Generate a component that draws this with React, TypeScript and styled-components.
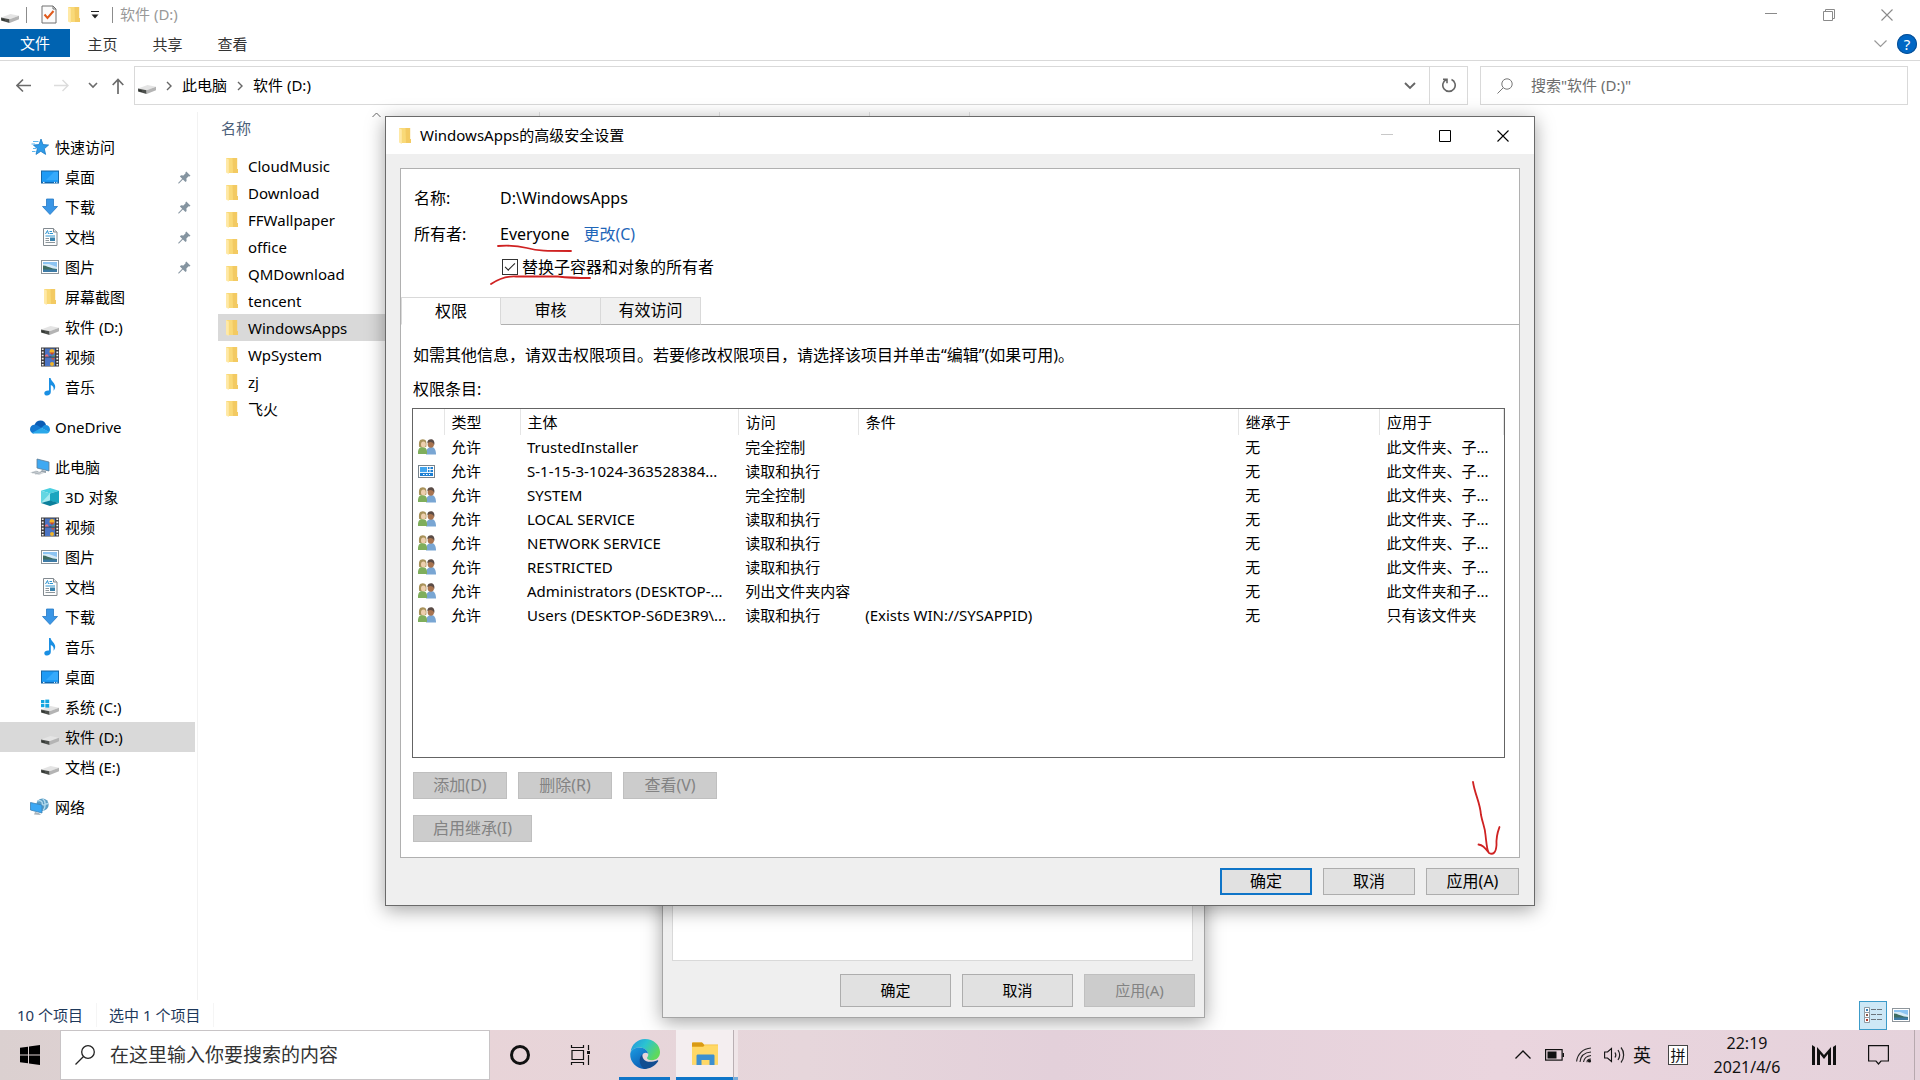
import React from 'react';
import styled, { createGlobalStyle, css } from 'styled-components';

const FONT = '"Noto Sans", "Noto Sans CJK SC", sans-serif';

const GlobalStyle = createGlobalStyle`
  *, *::before, *::after { box-sizing: border-box; }
  html, body { margin: 0; padding: 0; }
  body { font-family: ${FONT}; font-size: 15px; line-height: 24px; color: #000; background: #fff; overflow: hidden; }
  button, input { font-family: inherit; font-size: inherit; line-height: inherit; color: inherit; margin: 0; padding: 0; }
  button { border: 0; background: none; cursor: default; }
  svg { display: block; flex: none; }
`;

/* ---------- icons ---------- */

const DriveIcon = ({ system = false }: { system?: boolean }) => (
  <svg width="18" height="18" viewBox="0 0 18 18">
    <path d="M0 11.6 9.5 8 18 9.8 8.6 13.2Z" fill="#e4e4e4" />
    <path d="M0 11.6 8.6 13.2V17L0 14.6Z" fill="#4c4f4c" />
    <path d="M1 13 4 13.5V14.8L1 14.2Z" fill="#2d322d" />
    <path d="M8.6 13.2 18 9.8V13.2L8.6 17Z" fill="#b4b4b4" />
    {system && (
      <g fill="#12a5e0">
        <rect x="0" y="2" width="3.4" height="3.2" />
        <rect x="4.3" y="1.6" width="3.9" height="3.6" />
        <rect x="0" y="6" width="3.4" height="3.2" />
        <rect x="4.3" y="6" width="3.9" height="3.6" />
      </g>
    )}
  </svg>
);

const FolderIcon = () => (
  <svg width="14" height="18" viewBox="0 0 14 18">
    <path d="M1 1H12V13.5H13V16H3L1 14Z" fill="#f9d978" />
    <path d="M7.5 1H12.2V12H13V16H8Z" fill="#f3ca62" />
    <path d="M1 1 3.8 2.6V17L1 15.4Z" fill="#ffe9a6" />
  </svg>
);

const CheckDocIcon = () => (
  <svg width="16" height="19" viewBox="0 0 16 19">
    <path d="M1 1H12L15 4V18H1Z" fill="#fbfbfb" stroke="#707070" />
    <path d="M12 1V4H15" fill="none" stroke="#707070" />
    <path d="M3.5 9.5 6.5 13 12.5 6" fill="none" stroke="#e05a1c" strokeWidth="2" />
  </svg>
);

const StarIcon = () => (
  <svg width="20" height="18" viewBox="0 0 20 18">
    <path d="M11 1 13 6.6 18.6 7 14.3 10.8 15.6 16.4 10.8 13.3 6 16.4 7.3 10.8 3.5 7 9 6.6Z" fill="#2f9be8" stroke="#1978c4" strokeWidth=".8" />
    <path d="M3 3.500H8.500M1.500 6H5M3 10.500H6M2 13.500H5.500" stroke="#5db6ef" strokeWidth="1" />
  </svg>
);

const DesktopIcon = () => (
  <svg width="18" height="18" viewBox="0 0 18 18">
    <rect x=".5" y="3" width="17" height="12" fill="#1e9bf5" stroke="#1768a8" />
    <path d="M5 12 13 4H17V12Z" fill="#35aafc" />
    <path d="M1 14.4H17" stroke="#0d63ad" strokeWidth="1" />
    <path d="M2 14.4H3.5M13 14.4H14M15.300 14.4H16.3" stroke="#fff" strokeWidth="1" />
  </svg>
);

const DownloadIcon = () => (
  <svg width="18" height="18" viewBox="0 0 18 18">
    <path d="M5.500 1H12.500V8.500H16.500L9 16.500 1.500 8.500H5.500Z" fill="#3a96e6" stroke="#2579c4" strokeWidth=".8" />
  </svg>
);

const DocumentIcon = () => (
  <svg width="18" height="18" viewBox="0 0 18 18">
    <path d="M2.500 .5H12.500L16 4V17.500H2.500Z" fill="#fdfdfd" stroke="#828a90" />
    <path d="M12.500 .5V4H16" fill="#e7e7e7" stroke="#828a90" />
    <path d="M4.500 6 6.500 2.500 7.500 6M8.500 3.500H11M8.500 5.500H12M4.500 8H14" fill="none" stroke="#2c93cf" strokeWidth="1" />
    <path d="M4.500 10.500H8M4.500 12.500H8M4.500 14.500H14" stroke="#8c969c" strokeWidth="1" />
    <rect x="9" y="9.500" width="5" height="3.500" fill="#3b83ad" />
  </svg>
);

const PictureIcon = () => (
  <svg width="18" height="18" viewBox="0 0 18 18">
    <rect x=".5" y="2.500" width="17" height="13" fill="#fff" stroke="#8d959b" />
    <rect x="2" y="4" width="14" height="10" fill="#8cc4f2" />
    <path d="M2 6H8L16 9V12H2Z" fill="#d5eaf7" />
    <path d="M2 7.500C5 7.500 8 9.500 12 10.500L16 11V12H2Z" fill="#3f6d62" />
    <path d="M2 11.500H16V14H2Z" fill="#3d7ba6" />
  </svg>
);

const VideoIcon = () => (
  <svg width="18" height="20" viewBox="0 0 18 20">
    <rect x="0" y=".5" width="18" height="19" fill="#3b3b3f" />
    <rect x="4" y="1.500" width="10" height="8" fill="#4a74c4" />
    <rect x="4" y="10.500" width="10" height="8.500" fill="#4a74c4" />
    <path d="M4 8.500 6 7 8 9.500H4Z" fill="#e9707a" />
    <circle cx="11" cy="4.500" r="2.500" fill="#f0b429" />
    <path d="M8.500 5.500H13.500L11 8Z" fill="#c2452f" />
    <path d="M12 8.500H14V9.500H10Z" fill="#5ca84c" />
    <path d="M10 11H14L12 13.500Z" fill="#b65a46" />
    <circle cx="11" cy="17" r="2" fill="#f0b429" />
    <path d="M1.700 1.500V19.500M16.300 1.500V19.500" stroke="#f5f5f5" strokeWidth="1.800" strokeDasharray="1.600 1.500" />
  </svg>
);

const MusicIcon = () => (
  <svg width="18" height="18" viewBox="0 0 18 18">
    <path d="M8 0H9.600C10 3.500 14.500 5 14.200 9 14.100 10.800 13.200 12 12.500 12.700 13.200 9.500 12 8 9.800 7V14C9.800 16 8 17.500 6 17.500 4.400 17.500 3.300 16.600 3.300 15.200 3.300 13.500 5.300 12.300 8 12.600Z" fill="#1a8fe3" />
  </svg>
);

const CloudIcon = () => (
  <svg width="20" height="14" viewBox="0 0 20 14">
    <path d="M4.500 5C5.500 1.800 8 .5 10.500 .5 13.500 .5 15.500 2.500 16 5L10 9Z" fill="#0a5cb5" />
    <path d="M4.500 4.800C2 4.800 0 6.800 0 9.200 0 11.500 1.500 13 3.500 13.500L12 8.300 8 5.700C7 5 5.700 4.800 4.500 4.800Z" fill="#1478d0" />
    <path d="M15.500 5C18 5 20 7 20 9.500 20 10.500 19.600 11.500 19 12.200L11.500 8C12.500 6.500 13.500 5 15.500 5Z" fill="#1a90e0" />
    <path d="M2 13 11.500 7.800 19.200 12C18.500 13 17.300 13.500 16 13.500H4.300C3.400 13.500 2.600 13.400 2 13Z" fill="#2aa8ea" />
  </svg>
);

const PcIcon = () => (
  <svg width="20" height="18" viewBox="0 0 20 18">
    <path d="M7 1 19 4V13L7 10Z" fill="#3fa9f2" stroke="#5d7c95" strokeWidth=".8" />
    <path d="M12 12 16 13V15L10 14Z" fill="#98a4ad" />
    <path d="M0 14.500 6 12.500 14 15 9 17Z" fill="#cfd4d8" />
    <path d="M2 14.800 8 13.500M5 16 11 14.500" stroke="#9aa3aa" strokeWidth=".7" />
  </svg>
);

const CubeIcon = () => (
  <svg width="18" height="18" viewBox="0 0 18 18">
    <path d="M9 0 18 2.800 9 5.500 0 2.800Z" fill="#48cfe0" />
    <path d="M0 2.800 9 5.500V13L0 15Z" fill="#a6eaf0" />
    <path d="M9 5.500 18 2.800V15L9 13Z" fill="#19a5bf" />
    <path d="M0 15 9 12.500 18 15 9 18Z" fill="#0b809c" />
    <path d="M0 2.800 9 5.500 0 15Z" fill="#63d6e2" />
  </svg>
);

const NetworkIcon = () => (
  <svg width="20" height="18" viewBox="0 0 20 18">
    <circle cx="12.500" cy="6.700" r="6.200" fill="#5a9dc4" />
    <path d="M8 3C11 2 13 4 12 6.500 14 8 16 5.500 18 5.500M12.500 .5C16 3 16 9 13 12.500" fill="none" stroke="#b5dcef" strokeWidth="1.300" />
    <path d="M.5 4.500 12 7V15L.5 12Z" fill="#3ba8f4" stroke="#3a81b4" strokeWidth=".8" />
    <path d="M5 14 9 15 11 17 4 16.500Z" fill="#a9b3ba" />
  </svg>
);

const PinIcon = () => (
  <svg width="13" height="13" viewBox="0 0 13 13">
    <path d="M8.300 .5 12.500 4.700 11.300 5.500 10.600 5.300 8.400 7.600 8.600 9.900 7.500 11 4.900 8.500 1 12.500H.3V11.800L4.200 7.800 1.900 5.400 3 4.300 5.400 4.500 7.600 2.300 7.400 1.500Z" fill="#8594a0" />
  </svg>
);

const PeopleIcon = () => (
  <svg width="18" height="16" viewBox="0 0 18 16">
    <path d="M8 15.500C7.500 11 10 8 13.300 8S18 11.500 18 15.500Z" fill="#79a6d3" />
    <ellipse cx="12.800" cy="5" rx="3.200" ry="3.800" fill="#a9744f" />
    <path d="M9.300 4C9.300 1.300 11 .3 13 .3S17 2 16.300 6C15.500 4 14.500 3.200 12 3Z" fill="#5b4c46" />
    <path d="M0 15C-.3 10.500 1 8 4.500 8S9.300 10.500 9 15Z" fill="#7fae5c" />
    <path d="M1.200 8C.3 3 1.500 .3 4.800 .3S9 3 8.200 8Z" fill="#a8925a" />
    <ellipse cx="5.400" cy="5.400" rx="2.400" ry="3" fill="#edcfae" />
  </svg>
);

const AppPackageIcon = () => (
  <svg width="17" height="13" viewBox="0 0 17 13">
    <rect x=".5" y=".5" width="16" height="12" fill="#fff" stroke="#77838c" />
    <rect x="2" y="2" width="13" height="9" fill="#1c7fd2" />
    <path d="M2 2H9V7H2Z" fill="#41a5ee" />
    <path d="M9.500 2V7.500M12 2V7.500M9.500 4.500H15M2 7.500H15" stroke="#fff" strokeWidth=".9" />
    <path d="M5 9.500H6.500M8 9.500H9.500M11 9.500H12" stroke="#fff" />
  </svg>
);

const Line = ({ d, w = 18, h = 18, stroke = '#555', sw = 1 }: { d: string; w?: number; h?: number; stroke?: string; sw?: number }) => (
  <svg width={w} height={h} viewBox={`0 0 ${w} ${h}`}>
    <path d={d} fill="none" stroke={stroke} strokeWidth={sw} />
  </svg>
);

const MinimizeIcon = ({ color }: { color: string }) => <Line d="M0 5.500H12" w={12} h={13} stroke={color} />;
const CloseIcon = ({ color }: { color: string }) => <Line d="M.5 .5 11.500 11.500M11.500 .5 .5 11.500" w={12} h={12} stroke={color} sw={1.1} />;
const MaximizeIcon = () => <Line d="M.5 .5H11.500V11.500H.5Z" w={12} h={12} stroke="#000" />;
const RestoreIcon = () => <Line d="M.5 2.500H9.500V11.500H.5ZM2.500 2.500V.5H11.500V9.500H9.500" w={12} h={12} stroke="#8a8a8a" />;

const EdgeIcon = () => (
  <svg width="30" height="30" viewBox="0 0 30 30">
    <defs>
      <linearGradient id="edgeTop" x1="0" y1="0" x2="1" y2=".5">
        <stop offset="0" stopColor="#2492dd" />
        <stop offset=".5" stopColor="#2bc3d2" />
        <stop offset="1" stopColor="#5fd95c" />
      </linearGradient>
      <linearGradient id="edgeLeft" x1="0" y1="0" x2=".6" y2="1">
        <stop offset="0" stopColor="#1b9de2" />
        <stop offset="1" stopColor="#0b5cb4" />
      </linearGradient>
    </defs>
    <path d="M.6 13C1.500 5.500 7.500 0 15 0 23.500 0 30 6 30 13 30 18 26.500 21.200 22 21.200 18.500 21.200 17 20 17 19 17 18.200 18.300 17.500 18.300 15.500 18.300 12.500 15 8.500 10 8.500 5.500 8.500 2 10.500 .6 13Z" fill="url(#edgeTop)" />
    <path d="M.2 15C.8 11 4.500 8.500 9.500 8.500 14.500 8.500 18.300 12 18.300 15.500 18.300 13.500 13 12.500 11.500 17.500 10.500 21.500 13.500 26.500 19 27 17.500 29 16 30 14 29.900 6 29.500 0 23 .2 15Z" fill="url(#edgeLeft)" />
    <path d="M12.500 15C11.500 20.500 17 25.500 27.500 21.200 28.300 21.200 28.500 21.800 28 22.500 25 27 20 30 14.500 29.900 9 26.500 8 19 12.500 15Z" fill="#124d91" />
  </svg>
);

const ExplorerIcon = () => (
  <svg width="28" height="24" viewBox="0 0 28 24">
    <path d="M1 1.500C1 1 1.500 .5 2 .5H11L13 2.500H27V22.500H1Z" fill="#f5bd35" />
    <path d="M1 1.500C1 1 1.500 .5 2 .5H11L13 2.500V4.500H1Z" fill="#d99a15" />
    <path d="M1 5H12L14 3.300H27V22.500H1Z" fill="#ffd866" />
    <path d="M5.500 23V14C5.500 13 6 12.500 7 12.500H22C23 12.500 23.500 13 23.500 14V23H18.500V18H10.500V23Z" fill="#3c8fd0" />
  </svg>
);

const TaskViewIcon = () => (
  <svg width="21" height="20" viewBox="0 0 21 20">
    <path d="M2 5.500H13.500V14.500H2ZM1.500 0V2.500H13.500V0M1.500 20V17.500H13.500V20M18.500 0V5M18.500 10V20" fill="none" stroke="#111" strokeWidth="1.200" />
    <rect x="17" y="6" width="3" height="3" fill="#111" />
  </svg>
);

const WindowsIcon = () => (
  <svg width="20" height="20" viewBox="0 0 20 20">
    <path d="M0 2.800 8 1.700V9.500H0ZM9 1.500 20 0V9.500H9ZM0 10.500H8V18.300L0 17.200ZM9 10.500H20V20L9 18.500Z" fill="#000" />
  </svg>
);

const BatteryIcon = () => (
  <svg width="19" height="12" viewBox="0 0 19 12">
    <rect x=".6" y=".6" width="16.500" height="10.500" fill="none" stroke="#111" strokeWidth="1.200" />
    <rect x="2.500" y="2.500" width="9" height="7" fill="#111" />
    <path d="M18.300 4V8" stroke="#111" strokeWidth="1.400" />
  </svg>
);

const WifiIcon = () => (
  <svg width="16" height="16" viewBox="0 0 16 16">
    <path d="M.6 14.500C1.500 7 7 1.500 15 1M4 15C4.500 9.500 8.500 5.500 15 5M7.500 15C8 11.500 10.500 9 15 8.500M11 15.200C11 13.500 12.500 12 15 12" fill="none" stroke="#222" strokeWidth="1.100" />
    <circle cx="13.500" cy="14" r="1.600" fill="#111" />
  </svg>
);

const VolumeIcon = () => (
  <svg width="21" height="18" viewBox="0 0 21 18">
    <path d="M.6 6H3.500L7.500 2.500V15.500L3.500 12H.6Z" fill="none" stroke="#111" strokeWidth="1.100" />
    <path d="M11 6.500C12 8 12 10 11 11.500M14 4C16 7 16 11 14 14M17 1.500C20.500 5.500 20.500 12.500 17 16.500" fill="none" stroke="#222" strokeWidth="1.200" />
  </svg>
);

const BrandMIcon = () => (
  <svg width="24" height="20" viewBox="0 0 24 20">
    <path d="M0 0 3 2V20H0ZM5 2 12 10 19 2V20H16V9L12 14 8 9V20H5ZM21 2 24 0V20H21Z" fill="#111" />
  </svg>
);

const NotifyIcon = () => (
  <svg width="21" height="20" viewBox="0 0 21 20">
    <path d="M.6 .6H20.400V16H13L10.500 19 8 16H.6Z" fill="none" stroke="#111" strokeWidth="1.200" />
  </svg>
);

const DetailsIcon = () => (
  <svg width="18" height="16" viewBox="0 0 18 16">
    <path d="M.5 .5H5.500V5.500H.5ZM.5 5.500H5.500V10.500H.5ZM.5 10.500H5.500V15.500H.5Z" fill="#fff" stroke="#8f9ba3" />
    <rect x="2" y="2" width="2" height="2" fill="#3a7fb5" />
    <rect x="2" y="7" width="2" height="2" fill="#8a5a4a" />
    <rect x="2" y="12" width="2" height="2" fill="#b03a2a" />
    <path d="M7 2.500H12M13 2.500H18M7 7.500H12M13 7.500H18M7 12.500H12M13 12.500H18" stroke="#6b757c" />
  </svg>
);

/* ---------- desktop and explorer window ---------- */

const Desktop = styled.div`
  position: relative;
  display: flex;
  flex-direction: column;
  height: 100vh;
  overflow: hidden;
  background: #fff;
`;

const Explorer = styled.main`
  flex: 1;
  min-height: 0;
  display: flex;
  flex-direction: column;
`;

const TitleBar = styled.header`
  display: flex;
  align-items: center;
  height: 29px;
  padding-left: 1px;
  color: #999;
`;

const QuickTools = styled.div`
  display: flex;
  align-items: center;
  gap: 10px;
  margin: 0 6px 0 14px;
`;

const Divider = styled.span`
  width: 1px;
  height: 16px;
  margin-left: 7px;
  background: #8c8c8c;
`;

const WindowTitle = styled.span`
  flex: 1;
  padding-left: 7px;
  padding-bottom: 2px;
`;

const WindowButton = styled.button`
  display: grid;
  place-items: center;
  width: 58px;
  height: 100%;
`;

const WindowButtons = styled.div<{ $end: number }>`
  display: flex;
  height: 100%;
  padding-right: ${(p) => p.$end}px;
`;

const Ribbon = styled.nav`
  display: flex;
  height: 32px;
  padding-bottom: 3px;
  border-bottom: 1px solid #d9d9d9;
`;

const RibbonTab = styled.button<{ $primary?: boolean }>`
  width: ${(p) => (p.$primary ? 70 : 65)}px;
  color: ${(p) => (p.$primary ? '#fff' : '#333')};
  background: ${(p) => (p.$primary ? '#0063b1' : 'transparent')};
  padding-top: ${(p) => (p.$primary ? 0 : 2)}px;
`;

const RibbonEnd = styled.div`
  display: flex;
  align-items: center;
  gap: 10px;
  margin-left: auto;
  padding: 2px 3px 0 0;
`;

const HelpButton = styled.button`
  width: 20px;
  height: 20px;
  border-radius: 50%;
  background: #0067c5;
  color: #fff;
  line-height: 20px;
  box-shadow: inset 0 0 0 1px #0a4f94;
`;

const AddressRow = styled.div`
  display: flex;
  align-items: center;
  padding: 5px 12px 7px 5px;
`;

const NavButton = styled.button<{ $w: number }>`
  display: grid;
  place-items: center;
  width: ${(p) => p.$w}px;
  height: 38px;
`;

const field = css`
  display: flex;
  align-items: center;
  height: 39px;
  border: 1px solid #d9d9d9;
`;

const AddressBox = styled.div`
  ${field}
  flex: 1;
  margin-left: 2px;
  padding-left: 3px;
`;

const Crumb = styled.button`
  padding-bottom: 2px;
`;

const AddressEnd = styled.div`
  display: flex;
  margin-left: auto;
`;

const RefreshButton = styled(NavButton)`
  border-left: 1px solid #d9d9d9;
`;

const SearchBox = styled.label`
  ${field}
  width: 428px;
  margin-left: 12px;
  padding-left: 16px;
  gap: 18px;
`;

const SearchInput = styled.input`
  flex: 1;
  min-width: 0;
  border: 0;
  padding-bottom: 2px;
  outline: 0;
  background: none;
  &::placeholder { color: #6d6d6d; opacity: 1; }
`;

const Content = styled.div`
  flex: 1;
  min-height: 0;
  display: flex;
`;

const Sidebar = styled.nav`
  display: flex;
  flex-direction: column;
  gap: 10px;
  width: 198px;
  padding: 20px 2px 0 0;
  border-right: 1px solid #f2f2f2;
`;

const Group = styled.ul`
  margin: 0;
  padding: 0;
  list-style: none;
`;

const TreeItem = styled.li<{ $root?: boolean; $selected?: boolean }>`
  display: flex;
  align-items: center;
  gap: ${(p) => (p.$root ? 5 : 6)}px;
  height: 30px;
  padding-left: ${(p) => (p.$root ? 30 : 41)}px;
  padding-right: 4px;
  background: ${(p) => (p.$selected ? '#d9d9d9' : 'transparent')};
`;

const IconSlot = styled.span<{ $w: number }>`
  display: grid;
  place-items: center;
  flex: none;
  width: ${(p) => p.$w}px;
`;

const TreeLabel = styled.span`
  flex: 1;
  white-space: nowrap;
`;

const Files = styled.section`
  flex: 1;
  min-width: 0;
  padding-left: 15px;
`;

const FileHeader = styled.div`
  display: flex;
  height: 40px;
`;

const HeadCell = styled.div<{ $w: number }>`
  display: flex;
  flex-direction: column;
  width: ${(p) => p.$w}px;
  height: 32px;
  padding-left: 8px;
  border-right: 1px solid #e5e5e5;
  color: #4c607a;
`;

const SortMark = styled.span`
  display: flex;
  justify-content: center;
  height: 4px;
  margin-left: -8px;
`;

const FileList = styled.ul`
  margin: 0;
  padding: 0 0 0 5px;
  list-style: none;
  width: 326px;
`;

const FileItem = styled.li<{ $selected?: boolean }>`
  display: flex;
  align-items: center;
  gap: 9px;
  height: 27px;
  padding-left: 7px;
  background: ${(p) => (p.$selected ? '#d9d9d9' : 'transparent')};
`;

const StatusBar = styled.footer`
  display: flex;
  align-items: center;
  height: 30px;
  padding: 0 10px 0 17px;
  color: #1e395b;
`;

const StatusText = styled.span`
  padding-right: 13px;
  margin-right: 12px;
  border-right: 1px solid #f5f5f5;
`;

const ViewButtons = styled.div`
  display: flex;
  align-items: center;
  gap: 5px;
  margin-left: auto;
`;

const ViewButton = styled.button<{ $active?: boolean }>`
  display: grid;
  place-items: center;
  width: ${(p) => (p.$active ? 28 : 18)}px;
  height: 29px;
  border: ${(p) => (p.$active ? '1px solid #3c9bc9' : '0')};
  background: ${(p) => (p.$active ? '#cde8f6' : 'transparent')};
`;

/* ---------- dialogs ---------- */

const DialogWindow = styled.section<{ $x: number; $y: number; $w: number; $edge: string }>`
  position: absolute;
  left: ${(p) => p.$x}px;
  top: ${(p) => p.$y}px;
  width: ${(p) => p.$w}px;
  display: flex;
  flex-direction: column;
  border: 1px solid ${(p) => p.$edge};
  background: #efefef;
  box-shadow: 0 4px 18px rgba(0, 0, 0, 0.36);
`;

const DialogTitle = styled.header`
  display: flex;
  align-items: center;
  gap: 8px;
  height: 37px;
  padding-left: 12px;
  background: #fff;
`;

const DialogName = styled.h1`
  flex: 1;
  margin: 0;
  padding-bottom: 2px;
  font-size: 15px;
  font-weight: 400;
`;

const SecurityBody = styled.div`
  padding: 14px 14px 10px;
  font-size: 16px;
`;

const Panel = styled.div`
  padding-top: 11px;
  padding-bottom: 15px;
  border: 1px solid #b0b0b0;
  background: #fff;
`;

const InfoRow = styled.div`
  display: flex;
  align-items: center;
  height: 36px;
  padding-left: 13px;
`;

const InfoLabel = styled.span`
  width: 86px;
`;

const ChangeLink = styled.a`
  margin-left: 14px;
  color: #1f66b8;
  text-decoration: none;
`;

const ReplaceOwner = styled.label`
  display: flex;
  align-items: center;
  gap: 4px;
  height: 28px;
  padding: 2px 0 0 101px;
`;

const CheckBox = styled.input`
  appearance: none;
  width: 16px;
  height: 16px;
  border: 1px solid #333;
  background: #fff;
  display: grid;
  place-items: center;
  &:checked::after {
    content: '';
    width: 10px;
    height: 5px;
    margin-bottom: 3px;
    border-left: 1px solid #222;
    border-bottom: 1px solid #222;
    transform: rotate(-45deg);
  }
`;

const Tabs = styled.div`
  display: flex;
  height: 28px;
  margin-top: 17px;
  &::after {
    content: '';
    flex: 1;
    border-bottom: 1px solid #b0b0b0;
  }
`;

const Tab = styled.button<{ $active?: boolean }>`
  width: 100px;
  padding-bottom: ${(p) => (p.$active ? 0 : 2)}px;
  border: 1px solid #d9d9d9;
  border-left-width: ${(p) => (p.$active ? 1 : 0)}px;
  border-bottom-color: ${(p) => (p.$active ? '#fff' : '#b0b0b0')};
  background: ${(p) => (p.$active ? '#fff' : '#f0f0f0')};
`;

const TabPage = styled.div`
  padding: 18px 14px 0 11px;
`;

const Hint = styled.p`
  margin: 0 0 10px 1px;
`;

const ListLabel = styled.p`
  margin: 0 0 7px 1px;
`;

const ListFrame = styled.div`
  min-height: 350px;
  border: 1px solid #646464;
  font-size: 15px;
`;

const Entries = styled.table`
  width: 100%;
  table-layout: fixed;
  border-collapse: collapse;
  th, td {
    padding: 0 0 0 7px;
    height: 24px;
    text-align: left;
    font-weight: 400;
    white-space: nowrap;
    overflow: hidden;
  }
  th {
    height: 26px;
    padding-bottom: 1px;
    border-right: 1px solid #e5e5e5;
  }
  th:first-child, td:first-child { padding-left: 5px; }
`;

const ButtonRow = styled.div<{ $gap: number }>`
  display: flex;
  gap: 11px;
  margin-top: ${(p) => p.$gap}px;
  padding-left: 1px;
`;

const Footer = styled.div<{ $gap: number; $end?: number }>`
  display: flex;
  justify-content: flex-end;
  gap: 11px;
  margin-top: ${(p) => p.$gap}px;
  padding-right: ${(p) => p.$end ?? 0}px;
`;

const PushButton = styled.button<{ $w: number; $tall?: boolean; $default?: boolean }>`
  width: ${(p) => p.$w}px;
  height: ${(p) => (p.$tall ? 33 : 27)}px;
  padding-bottom: 2px;
  border: ${(p) => (p.$default ? '2px solid #0f75c8' : '1px solid #adadad')};
  background: #e1e1e1;
  line-height: 20px;
  &:disabled {
    border-color: #bfbfbf;
    background: #ccc;
    color: #838383;
  }
`;

const Markup = styled.svg`
  position: absolute;
  left: 0;
  top: 0;
  pointer-events: none;
`;

const PropertiesBody = styled.div`
  padding: 0 9px 10px;
`;

const PropertiesPage = styled.div`
  min-height: 661px;
  margin-right: 2px;
  border: 1px solid #d9d9d9;
  background: #fff;
`;

/* ---------- taskbar ---------- */

const Taskbar = styled.footer`
  position: relative;
  display: flex;
  flex: none;
  height: 50px;
  background: linear-gradient(90deg, #dbd0d0 0%, #e8d4d8 25%, #e6d6db 42%, #e3d0da 55%, #ead5de 78%, #e5d2db 100%);
  color: #111;
`;

const TaskButton = styled.button<{ $w: number }>`
  display: grid;
  place-items: center;
  width: ${(p) => p.$w}px;
  height: 50px;
  font-size: 18px;
`;

const TaskSearch = styled.label`
  display: flex;
  align-items: center;
  gap: 15px;
  width: 430px;
  padding-left: 14px;
  border: 1px solid #c8c4c6;
  background: #fff;
  font-size: 19px;
`;

const TaskInput = styled(SearchInput)`
  padding-bottom: 0;
  &::placeholder { color: #333; }
`;

const AppButton = styled(TaskButton)<{ $open?: boolean }>`
  margin-left: ${(p) => (p.$open ? 6 : 9)}px;
  border-bottom: 3px solid #0f75c8;
  background: ${(p) => (p.$open ? '#f4eef0' : 'transparent')};
`;

const StackEdge = styled.span`
  width: 5px;
  border-left: 1px solid #b9afb3;
  border-bottom: 3px solid #76abd9;
  background: #efe5e8;
`;

const Tray = styled.div`
  display: flex;
  margin-left: auto;
`;

const Ring = styled.span`
  width: 20px;
  height: 20px;
  border: 3px solid #111;
  border-radius: 50%;
`;

const ImeBadge = styled.span`
  width: 20px;
  height: 20px;
  border: 1px solid #444;
  background: #fff;
  font-size: 15px;
  line-height: 18px;
`;

const Clock = styled.button`
  width: 92px;
  font-size: 16px;
  line-height: 24px;
`;

const ShowDesktop = styled.button`
  width: 6px;
  margin-left: 12px;
  border-left: 1px solid #b7a8ae;
`;

/* ---------- data ---------- */

type Node = { label: string; icon: React.ReactNode; pinned?: boolean; selected?: boolean };

const groups: Node[][] = [
  [
    { label: '快速访问', icon: <StarIcon /> },
    { label: '桌面', icon: <DesktopIcon />, pinned: true },
    { label: '下载', icon: <DownloadIcon />, pinned: true },
    { label: '文档', icon: <DocumentIcon />, pinned: true },
    { label: '图片', icon: <PictureIcon />, pinned: true },
    { label: '屏幕截图', icon: <FolderIcon /> },
    { label: '软件 (D:)', icon: <DriveIcon /> },
    { label: '视频', icon: <VideoIcon /> },
    { label: '音乐', icon: <MusicIcon /> },
  ],
  [{ label: 'OneDrive', icon: <CloudIcon /> }],
  [
    { label: '此电脑', icon: <PcIcon /> },
    { label: '3D 对象', icon: <CubeIcon /> },
    { label: '视频', icon: <VideoIcon /> },
    { label: '图片', icon: <PictureIcon /> },
    { label: '文档', icon: <DocumentIcon /> },
    { label: '下载', icon: <DownloadIcon /> },
    { label: '音乐', icon: <MusicIcon /> },
    { label: '桌面', icon: <DesktopIcon /> },
    { label: '系统 (C:)', icon: <DriveIcon system /> },
    { label: '软件 (D:)', icon: <DriveIcon />, selected: true },
    { label: '文档 (E:)', icon: <DriveIcon /> },
  ],
  [{ label: '网络', icon: <NetworkIcon /> }],
];

const files = ['CloudMusic', 'Download', 'FFWallpaper', 'office', 'QMDownload', 'tencent', 'WindowsApps', 'WpSystem', 'zj', '飞火'];

const columns = [
  { name: '', width: 31 },
  { name: '类型', width: 76 },
  { name: '主体', width: 218 },
  { name: '访问', width: 120 },
  { name: '条件', width: 380 },
  { name: '继承于', width: 141 },
  { name: '应用于', width: 124 },
];

const entries = [
  ['TrustedInstaller', '完全控制', '', '此文件夹、子...'],
  ['S-1-15-3-1024-363528384...', '读取和执行', '', '此文件夹、子...'],
  ['SYSTEM', '完全控制', '', '此文件夹、子...'],
  ['LOCAL SERVICE', '读取和执行', '', '此文件夹、子...'],
  ['NETWORK SERVICE', '读取和执行', '', '此文件夹、子...'],
  ['RESTRICTED', '读取和执行', '', '此文件夹、子...'],
  ['Administrators (DESKTOP-...', '列出文件夹内容', '', '此文件夹和子...'],
  ['Users (DESKTOP-S6DE3R9\\...', '读取和执行', '(Exists WIN://SYSAPPID)', '只有该文件夹'],
];

/* ---------- parts ---------- */

const CrumbArrow = () => (
  <IconSlot $w={26}>
    <Line d="M1 1 5 5 1 9" w={6} h={10} stroke="#666" sw={1.4} />
  </IconSlot>
);

const ExplorerWindow = () => (
  <Explorer>
    <TitleBar>
      <DriveIcon />
      <Divider />
      <QuickTools>
        <CheckDocIcon />
        <FolderIcon />
        <svg width="8" height="8" viewBox="0 0 8 8">
          <path d="M0 .5H8" stroke="#222" />
          <path d="M.5 3.500H7.500L4 7.500Z" fill="#222" />
        </svg>
      </QuickTools>
      <Divider />
      <WindowTitle>软件 (D:)</WindowTitle>
      <WindowButtons $end={4}>
        <WindowButton aria-label="最小化"><MinimizeIcon color="#8a8a8a" /></WindowButton>
        <WindowButton aria-label="还原"><RestoreIcon /></WindowButton>
        <WindowButton aria-label="关闭"><CloseIcon color="#8a8a8a" /></WindowButton>
      </WindowButtons>
    </TitleBar>
    <Ribbon>
      <RibbonTab $primary>文件</RibbonTab>
      <RibbonTab>主页</RibbonTab>
      <RibbonTab>共享</RibbonTab>
      <RibbonTab>查看</RibbonTab>
      <RibbonEnd>
        <Line d="M.5 .5 6.500 6.500 12.500 .5" w={13} h={8} stroke="#999" sw={1.2} />
        <HelpButton>?</HelpButton>
      </RibbonEnd>
    </Ribbon>
    <AddressRow>
      <NavButton $w={38} aria-label="后退"><Line d="M1 7.500H15M7 1.500 1 7.500 7 13.500" w={16} h={15} stroke="#6b6b6b" sw={1.6} /></NavButton>
      <NavButton $w={38} aria-label="前进"><Line d="M0 7.500H14M8.500 2 14 7.500 8.500 13" w={16} h={15} stroke="#dcdcdc" sw={1.4} /></NavButton>
      <NavButton $w={23} aria-label="最近"><Line d="M1 1 5 5 9 1" w={10} h={7} stroke="#6b6b6b" sw={1.6} /></NavButton>
      <NavButton $w={28} aria-label="向上"><Line d="M6 16V1.500M.7 7 6 1.500 11.300 7" w={12} h={16} stroke="#6b6b6b" sw={1.7} /></NavButton>
      <AddressBox>
        <DriveIcon />
        <CrumbArrow />
        <Crumb>此电脑</Crumb>
        <CrumbArrow />
        <Crumb>软件 (D:)</Crumb>
        <AddressEnd>
          <NavButton $w={38} aria-label="展开"><Line d="M1 1 6 6 11 1" w={12} h={8} stroke="#666" sw={1.9} /></NavButton>
          <RefreshButton $w={38} aria-label="刷新">
            <Line d="M9.500 1.500A6.200 6.200 0 1 1 4.500 1.500M1 1.200H5V5.200" w={14} h={15} stroke="#666" sw={1.6} />
          </RefreshButton>
        </AddressEnd>
      </AddressBox>
      <SearchBox>
        <svg width="16" height="16" viewBox="0 0 16 16">
          <circle cx="10" cy="6" r="5.200" fill="none" stroke="#777" />
          <path d="M6.300 9.700 .5 15.500" stroke="#777" />
        </svg>
        <SearchInput aria-label="搜索" placeholder={'搜索"软件 (D:)"'} />
      </SearchBox>
    </AddressRow>
    <Content>
      <Sidebar>
        {groups.map((group, g) => (
          <Group key={g}>
            {group.map((node, i) => (
              <TreeItem key={node.label} $root={i === 0} $selected={node.selected}>
                <IconSlot $w={i === 0 ? 20 : 18}>{node.icon}</IconSlot>
                <TreeLabel>{node.label}</TreeLabel>
                {node.pinned && <PinIcon />}
              </TreeItem>
            ))}
          </Group>
        ))}
      </Sidebar>
      <Files>
        <FileHeader>
          <HeadCell $w={327}>
            <SortMark><Line d="M.5 5 4.500 1 8.500 5" w={9} h={6} stroke="#666" /></SortMark>
            名称
          </HeadCell>
          <HeadCell $w={180} />
          <HeadCell $w={150} />
          <HeadCell $w={100} />
        </FileHeader>
        <FileList>
          {files.map((name) => (
            <FileItem key={name} $selected={name === 'WindowsApps'}>
              <FolderIcon />
              {name}
            </FileItem>
          ))}
        </FileList>
      </Files>
    </Content>
    <StatusBar>
      <StatusText>10 个项目</StatusText>
      <StatusText>选中 1 个项目</StatusText>
      <ViewButtons>
        <ViewButton $active aria-label="详细信息"><DetailsIcon /></ViewButton>
        <ViewButton aria-label="大图标"><PictureIcon /></ViewButton>
      </ViewButtons>
    </StatusBar>
  </Explorer>
);

const PropertiesDialog = () => (
  <DialogWindow $x={662} $y={262} $w={543} $edge="#a5a5a5">
    <DialogTitle />
    <PropertiesBody>
      <PropertiesPage />
      <Footer $gap={13}>
        <PushButton $w={111} $tall>确定</PushButton>
        <PushButton $w={111} $tall>取消</PushButton>
        <PushButton $w={111} $tall disabled>应用(A)</PushButton>
      </Footer>
    </PropertiesBody>
  </DialogWindow>
);

const SecurityDialog = () => (
  <DialogWindow $x={385} $y={116} $w={1150} $edge="#6a6a6a">
    <DialogTitle>
      <FolderIcon />
      <DialogName>WindowsApps的高级安全设置</DialogName>
      <WindowButtons $end={2}>
        <WindowButton aria-label="最小化"><MinimizeIcon color="#c8c8c8" /></WindowButton>
        <WindowButton aria-label="最大化"><MaximizeIcon /></WindowButton>
        <WindowButton aria-label="关闭"><CloseIcon color="#000" /></WindowButton>
      </WindowButtons>
    </DialogTitle>
    <SecurityBody>
      <Panel>
        <InfoRow>
          <InfoLabel>名称:</InfoLabel>
          <span>D:\WindowsApps</span>
        </InfoRow>
        <InfoRow>
          <InfoLabel>所有者:</InfoLabel>
          <span>Everyone</span>
          <ChangeLink href="#owner">更改(C)</ChangeLink>
        </InfoRow>
        <ReplaceOwner>
          <CheckBox type="checkbox" defaultChecked />
          替换子容器和对象的所有者
        </ReplaceOwner>
        <Tabs>
          <Tab $active>权限</Tab>
          <Tab>审核</Tab>
          <Tab>有效访问</Tab>
        </Tabs>
        <TabPage>
          <Hint>如需其他信息，请双击权限项目。若要修改权限项目，请选择该项目并单击“编辑”(如果可用)。</Hint>
          <ListLabel>权限条目:</ListLabel>
          <ListFrame>
            <Entries>
              <colgroup>
                {columns.map((c) => <col key={c.name} width={c.width} />)}
              </colgroup>
              <thead>
                <tr>{columns.map((c) => <th key={c.name}>{c.name}</th>)}</tr>
              </thead>
              <tbody>
                {entries.map(([who, access, condition, scope], i) => (
                  <tr key={who}>
                    <td>{i === 1 ? <AppPackageIcon /> : <PeopleIcon />}</td>
                    <td>允许</td>
                    <td>{who}</td>
                    <td>{access}</td>
                    <td>{condition}</td>
                    <td>无</td>
                    <td>{scope}</td>
                  </tr>
                ))}
              </tbody>
            </Entries>
          </ListFrame>
          <ButtonRow $gap={14}>
            <PushButton $w={94} disabled>添加(D)</PushButton>
            <PushButton $w={94} disabled>删除(R)</PushButton>
            <PushButton $w={94} disabled>查看(V)</PushButton>
          </ButtonRow>
          <ButtonRow $gap={16}>
            <PushButton $w={119} disabled>启用继承(I)</PushButton>
          </ButtonRow>
        </TabPage>
      </Panel>
      <Footer $gap={10} $end={1}>
        <PushButton $w={92} $default>确定</PushButton>
        <PushButton $w={92}>取消</PushButton>
        <PushButton $w={93}>应用(A)</PushButton>
      </Footer>
    </SecurityBody>
    <Markup width="1148" height="788" viewBox="386 117 1148 788" fill="none" stroke="#cf2222" strokeWidth="1.800" strokeLinecap="round">
      <path d="M498 246C512 245 519 246 527 248 538 251 546 251 571 251" />
      <path d="M491 284C500 278 508 276 516 276.500L558 276.500C570 278 576 278 590 278" />
      <path d="M1473 782C1475 795 1480 802 1481 815 1483 825 1485 827 1485.500 835 1487 848 1487 850 1488.500 852M1478.500 844.500C1483 845 1485 848 1489 853 1493 855 1496 853 1496.500 845 1496 836 1498 831 1499.500 827" />
    </Markup>
  </DialogWindow>
);

const App = () => (
  <>
    <GlobalStyle />
    <Desktop>
      <ExplorerWindow />
      <PropertiesDialog />
      <SecurityDialog />
      <Taskbar>
        <TaskButton $w={60} aria-label="开始"><WindowsIcon /></TaskButton>
        <TaskSearch>
          <svg width="20" height="20" viewBox="0 0 20 20">
            <circle cx="13" cy="7" r="6.300" fill="none" stroke="#222" strokeWidth="1.300" />
            <path d="M8.500 11.500 .5 19.500" stroke="#222" strokeWidth="1.300" />
          </svg>
          <TaskInput aria-label="搜索" placeholder="在这里输入你要搜索的内容" />
        </TaskSearch>
        <TaskButton $w={60} aria-label="Cortana"><Ring /></TaskButton>
        <TaskButton $w={60} aria-label="任务视图"><TaskViewIcon /></TaskButton>
        <AppButton $w={51} aria-label="Edge"><EdgeIcon /></AppButton>
        <AppButton $w={57} $open aria-label="文件资源管理器"><ExplorerIcon /></AppButton>
        <StackEdge />
        <Tray>
          <TaskButton $w={32} aria-label="显示隐藏的图标"><Line d="M.5 8.500 8 1 15.500 8.500" w={16} h={10} stroke="#111" sw={1.3} /></TaskButton>
          <TaskButton $w={30} aria-label="电池"><BatteryIcon /></TaskButton>
          <TaskButton $w={30} aria-label="网络"><WifiIcon /></TaskButton>
          <TaskButton $w={30} aria-label="音量"><VolumeIcon /></TaskButton>
          <TaskButton $w={26}>英</TaskButton>
          <TaskButton $w={46}><ImeBadge>拼</ImeBadge></TaskButton>
          <Clock>22:19<br />2021/4/6</Clock>
          <TaskButton $w={62} aria-label="电脑管家"><BrandMIcon /></TaskButton>
          <TaskButton $w={47} aria-label="通知"><NotifyIcon /></TaskButton>
          <ShowDesktop aria-label="显示桌面" />
        </Tray>
      </Taskbar>
    </Desktop>
  </>
);

export default App;
